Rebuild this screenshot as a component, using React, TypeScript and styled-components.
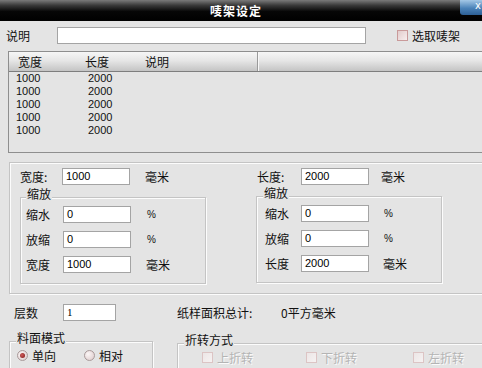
import React from 'react';
import styled, { createGlobalStyle } from 'styled-components';

const GlobalStyle = createGlobalStyle`
	html, body {
		margin: 0;
		padding: 0;
		background: #e4e4e4;
		overflow: hidden;
	}
	body {
		font-family: "Noto Sans CJK SC", "Liberation Sans", sans-serif;
		font-size: 12px;
		color: #111;
	}
`;

const Window = styled.div`
	position: relative;
	width: 482px;
	height: 368px;
	overflow: hidden;
	background: #e4e4e4;
	display: flex;
	flex-direction: column;
`;

const TitleBar = styled.div`
	height: 21px;
	flex-shrink: 0;
	display: flex;
	align-items: center;
	justify-content: center;
	padding-right: 10px;
	background: linear-gradient(#7a7a7a 0, #3a3a3a 25%, #060606 55%, #000 100%);
	color: #fff;
	font-weight: bold;
	font-size: 12px;
	letter-spacing: 1px;
`;

const CloseButton = styled.div`
	position: absolute;
	top: 0;
	right: 0;
	width: 22px;
	height: 15px;
	background: linear-gradient(#a4c8e6, #4a82b8 55%, #2d5f95);
	border-bottom-left-radius: 3px;
	color: #fff;
	font-size: 10px;
	line-height: 12px;
	text-align: right;
	padding-right: 1px;
	box-sizing: border-box;
	font-family: "DejaVu Sans", sans-serif;
`;

const DescRow = styled.div`
	display: flex;
	align-items: center;
	margin-top: 6px;
	height: 17px;
`;

const Label = styled.span<{ $w?: number; $pl?: number }>`
	display: inline-block;
	flex-shrink: 0;
	width: ${(p) => (p.$w ? `${p.$w}px` : 'auto')};
	padding-left: ${(p) => p.$pl ?? 0}px;
	box-sizing: content-box;
	white-space: nowrap;
	line-height: 17px;
`;

const TextBox = styled.div<{ $w: number; $serif?: boolean }>`
	width: ${(p) => p.$w}px;
	height: 17px;
	flex-shrink: 0;
	box-sizing: border-box;
	background: #fff;
	border: 1px solid #a4a4a4;
	padding-left: 3px;
	font-family: ${(p) => (p.$serif ? '"Liberation Serif", serif' : '"Liberation Sans", sans-serif')};
	font-size: 11px;
	line-height: 15px;
	color: #000;
`;

const Unit = styled.span<{ $ml: number }>`
	margin-left: ${(p) => p.$ml}px;
	white-space: nowrap;
	line-height: 17px;
`;

const PctUnit = styled(Unit)`
	font-family: "Liberation Sans", sans-serif;
	font-size: 10px;
`;

const CheckBox = styled.span<{ $disabled?: boolean }>`
	display: inline-block;
	flex-shrink: 0;
	width: 11px;
	height: 11px;
	box-sizing: border-box;
	border: 1px solid ${(p) => (p.$disabled ? '#dcc4c4' : '#c99a9a')};
	background: ${(p) =>
		p.$disabled
			? 'linear-gradient(135deg, #ece6e6, #f6f2f2)'
			: 'linear-gradient(135deg, #e2cccc, #f8eeee)'};
`;

const CheckText = styled.span<{ $disabled?: boolean }>`
	margin-left: 4px;
	white-space: nowrap;
	color: ${(p) => (p.$disabled ? '#b4b4b4' : '#111')};
	text-shadow: ${(p) => (p.$disabled ? '1px 1px 0 #fbfbfb' : 'none')};
`;

const Pick = styled.div`
	display: flex;
	align-items: center;
	margin-left: 31px;
`;

const List = styled.div`
	margin: 7px 0 0 8px;
	width: 490px;
	height: 102px;
	flex-shrink: 0;
	box-sizing: border-box;
	border: 1px solid #8e8e8e;
	background: #e4e4e4;
`;

const ListHeader = styled.div`
	height: 20px;
	display: grid;
	grid-template-columns: 67px 60px 122px 1fr;
	background: linear-gradient(#f6f6f6, #e6e6e6 45%, #c4c4c4);
	border-bottom: 1px solid #7e7e7e;
	box-sizing: border-box;
`;

const HeadCell = styled.div<{ $divider?: boolean }>`
	padding-left: 9px;
	line-height: 19px;
	border-right: ${(p) => (p.$divider ? '1px solid #9a9a9a' : 'none')};
	box-shadow: ${(p) => (p.$divider ? '1px 0 0 #f8f8f8' : 'none')};
`;

const ListRow = styled.div`
	height: 13px;
	display: grid;
	grid-template-columns: 72px 60px;
	padding-left: 7px;
	font-family: "Liberation Sans", sans-serif;
	font-size: 11px;
	line-height: 13px;
`;

const Group = styled.div<{ $w: number; $h: number; $mt?: number; $ml?: number }>`
	position: relative;
	width: ${(p) => p.$w}px;
	height: ${(p) => p.$h}px;
	margin-top: ${(p) => p.$mt ?? 0}px;
	margin-left: ${(p) => p.$ml ?? 0}px;
	flex-shrink: 0;
	box-sizing: border-box;
	border: 1px solid #c4c4c4;
	box-shadow: inset 1px 1px 0 #fcfcfc, 1px 1px 0 #fcfcfc;
`;

const Caption = styled.span<{ $left: number }>`
	position: absolute;
	top: -11px;
	left: ${(p) => p.$left}px;
	padding: 0 1px;
	background: #e4e4e4;
	line-height: 14px;
	white-space: nowrap;
`;

const SizeColumns = styled.div`
	display: grid;
	grid-template-columns: 237px 1fr;
	padding: 5px 0 0 10px;
`;

const SizeColumn = styled.div`
	display: flex;
	flex-direction: column;
`;

const FieldRow = styled.div<{ $pl?: number }>`
	display: flex;
	align-items: center;
	height: 17px;
	padding-left: ${(p) => p.$pl ?? 0}px;
`;

const ScaleRows = styled.div<{ $pl: number }>`
	display: flex;
	flex-direction: column;
	gap: 8px;
	padding: 8px 0 0 ${(p) => p.$pl}px;
`;

const BottomRow = styled.div`
	display: flex;
	align-items: center;
	height: 17px;
	margin-top: 10px;
	padding-left: 14px;
`;

const ModeRow = styled.div`
	display: flex;
	align-items: flex-start;
	margin-top: 20px;
	padding-left: 9px;
`;

const OptionRow = styled.div<{ $pl: number; $pt: number }>`
	display: flex;
	align-items: center;
	padding: ${(p) => p.$pt}px 0 0 ${(p) => p.$pl}px;
`;

const Option = styled.div<{ $w: number }>`
	display: flex;
	align-items: center;
	width: ${(p) => p.$w}px;
	flex-shrink: 0;
`;

const Radio = styled.span<{ $on?: boolean }>`
	position: relative;
	display: inline-block;
	flex-shrink: 0;
	width: 11px;
	height: 11px;
	box-sizing: border-box;
	border-radius: 50%;
	border: 1px solid #a99a9a;
	background: radial-gradient(circle at 35% 35%, #fbf6f6, #dcc8c8);

	&::after {
		content: '';
		display: ${(p) => (p.$on ? 'block' : 'none')};
		position: absolute;
		left: 2px;
		top: 2px;
		width: 5px;
		height: 5px;
		border-radius: 50%;
		background: radial-gradient(circle at 40% 40%, #d05a5a, #7a1818);
	}
`;

const RadioText = styled.span`
	margin-left: 4px;
	white-space: nowrap;
`;

type ScaleSide = { first: string; total: string; labelW: number; pl: number; unitMl: number };

const ScaleGroup = ({ first, total, labelW, pl, unitMl }: ScaleSide) => (
	<ScaleRows $pl={pl}>
		<FieldRow>
			<Label $w={labelW}>缩水</Label>
			<TextBox $w={68}>0</TextBox>
			<PctUnit $ml={unitMl}>%</PctUnit>
		</FieldRow>
		<FieldRow>
			<Label $w={labelW}>放缩</Label>
			<TextBox $w={68}>0</TextBox>
			<PctUnit $ml={unitMl}>%</PctUnit>
		</FieldRow>
		<FieldRow>
			<Label $w={labelW}>{first}</Label>
			<TextBox $w={68}>{total}</TextBox>
			<Unit $ml={unitMl - 1}>毫米</Unit>
		</FieldRow>
	</ScaleRows>
);

const rows = Array.from({ length: 5 }, () => ({ w: '1000', l: '2000' }));

export default function App() {
	return (
		<>
			<GlobalStyle />
			<Window>
				<TitleBar>唛架设定</TitleBar>
				<CloseButton>x</CloseButton>

				<DescRow>
					<Label $w={51} $pl={6}>说明</Label>
					<TextBox $w={309} />
					<Pick>
						<CheckBox />
						<CheckText>选取唛架</CheckText>
					</Pick>
				</DescRow>

				<List>
					<ListHeader>
						<HeadCell>宽度</HeadCell>
						<HeadCell>长度</HeadCell>
						<HeadCell $divider>说明</HeadCell>
						<HeadCell />
					</ListHeader>
					{rows.map((r, i) => (
						<ListRow key={i}>
							<span>{r.w}</span>
							<span>{r.l}</span>
						</ListRow>
					))}
				</List>

				<Group $w={490} $h={132} $mt={9} $ml={9}>
					<SizeColumns>
						<SizeColumn>
							<FieldRow>
								<Label $w={42}>宽度:</Label>
								<TextBox $w={68}>1000</TextBox>
								<Unit $ml={15}>毫米</Unit>
							</FieldRow>
							<Group $w={186} $h={87} $mt={12}>
								<Caption $left={5}>缩放</Caption>
								<ScaleGroup first="宽度" total="1000" labelW={37} pl={5} unitMl={16} />
							</Group>
						</SizeColumn>
						<SizeColumn>
							<FieldRow>
								<Label $w={44}>长度:</Label>
								<TextBox $w={68}>2000</TextBox>
								<Unit $ml={12}>毫米</Unit>
							</FieldRow>
							<Group $w={186} $h={87} $mt={11} $ml={-1}>
								<Caption $left={6}>缩放</Caption>
								<ScaleGroup first="长度" total="2000" labelW={36} pl={8} unitMl={15} />
							</Group>
						</SizeColumn>
					</SizeColumns>
				</Group>

				<BottomRow>
					<Label $w={49}>层数</Label>
					<TextBox $w={53} $serif>1</TextBox>
					<Label $w={104} style={{ marginLeft: 61 }}>纸样面积总计:</Label>
					<Label>0平方毫米</Label>
				</BottomRow>

				<ModeRow>
					<Group $w={144} $h={40}>
						<Caption $left={6}>料面模式</Caption>
						<OptionRow $pl={7} $pt={5}>
							<Option $w={67}>
								<Radio $on />
								<RadioText>单向</RadioText>
							</Option>
							<Option $w={60}>
								<Radio />
								<RadioText>相对</RadioText>
							</Option>
						</OptionRow>
					</Group>
					<Group $w={330} $h={40} $mt={2} $ml={24}>
						<Caption $left={6}>折转方式</Caption>
						<OptionRow $pl={24} $pt={5}>
							<Option $w={104}>
								<CheckBox $disabled />
								<CheckText $disabled>上折转</CheckText>
							</Option>
							<Option $w={107}>
								<CheckBox $disabled />
								<CheckText $disabled>下折转</CheckText>
							</Option>
							<Option $w={80}>
								<CheckBox $disabled />
								<CheckText $disabled>左折转</CheckText>
							</Option>
						</OptionRow>
					</Group>
				</ModeRow>
			</Window>
		</>
	);
}
